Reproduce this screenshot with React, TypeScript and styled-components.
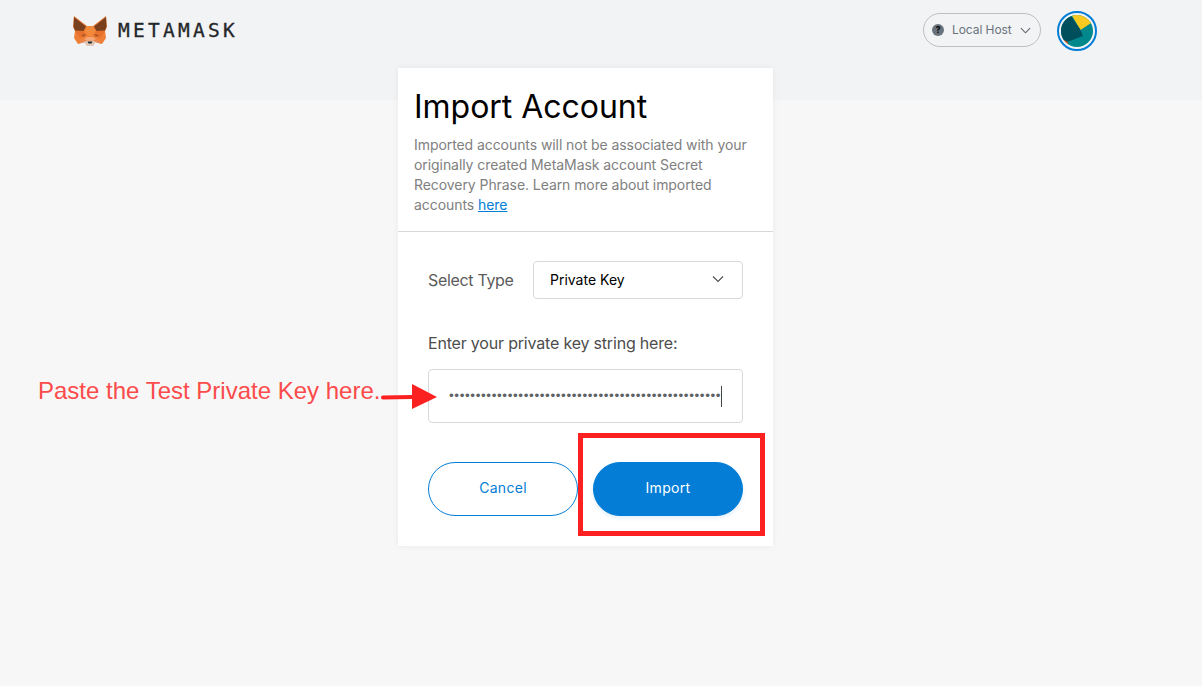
import React from "react";
import styled, { createGlobalStyle } from "styled-components";

const Global = createGlobalStyle`
  html, body { margin: 0; padding: 0; height: 100%; }
  body { background: #f7f7f7; font-family: "Inter", sans-serif; overflow: hidden; }
  #root { height: 100%; }
`;

const Page = styled.div`
  position: relative;
  width: 1202px;
  height: 686px;
  background: #f7f7f7;
  overflow: hidden;
`;

const HeaderBand = styled.header`
  height: 100px;
  background: #f2f3f4;
  box-sizing: border-box;
  padding: 11px 105px 0 73px;
  display: flex;
  justify-content: space-between;
  align-items: flex-start;
`;

const Brand = styled.div`
  display: flex;
  align-items: center;
  gap: 11px;
  height: 40px;
`;

const Wordmark = styled.span`
  font-family: "DejaVu Sans Mono", monospace;
  font-weight: 400;
  font-size: 19.5px;
  letter-spacing: 3.25px;
  color: #24272a;
  line-height: 40px;
  -webkit-text-stroke: 0.3px #24272a;
`;

const HeaderRight = styled.div`
  display: flex;
  align-items: center;
  gap: 16px;
`;

const NetworkPill = styled.div`
  width: 118px;
  height: 34px;
  margin-bottom: 2px;
  box-sizing: border-box;
  border: 1px solid #bbc0c5;
  border-radius: 17px;
  display: flex;
  align-items: center;
  padding: 0 9px 0 8px;
  color: #6a737d;
  font-family: "Inter", sans-serif;
  font-size: 12px;
  letter-spacing: -0.07px;
`;

const HelpDot = styled.span`
  width: 12px;
  height: 12px;
  border-radius: 50%;
  background: #6a737d;
  color: #0c0e10;
  font-size: 9px;
  font-weight: 800;
  line-height: 12px;
  text-align: center;
  margin-right: 8px;
  flex: none;
`;

const PillLabel = styled.span`
  flex: 1;
  white-space: nowrap;
  padding-bottom: 2px;
`;

const Avatar = styled.div`
  width: 40px;
  height: 40px;
  box-sizing: border-box;
  border: 2px solid #037dd6;
  border-radius: 50%;
  padding: 2px;
  background: #f2f3f4;
`;

const Card = styled.main`
  width: 375px;
  height: 478px;
  margin: -32px 0 0 398px;
  background: #fff;
  box-shadow: 0 0 6px rgba(0, 0, 0, 0.06);
  display: flex;
  flex-direction: column;
  position: relative;
`;

const CardHead = styled.div`
  height: 164px;
  box-sizing: border-box;
  padding: 19px 16px 0;
  border-bottom: 1px solid #d6d9dc;
`;

const Title = styled.h1`
  margin: 0;
  font-family: "Inter", sans-serif;
  font-weight: 400;
  font-size: 32px;
  line-height: 40px;
  letter-spacing: -0.03px;
  color: #000;
`;

const Description = styled.p`
  margin: 8px 0 0;
  font-family: "Inter", sans-serif;
  font-size: 14px;
  line-height: 20px;
  letter-spacing: -0.07px;
  color: #808080;
`;

const Link = styled.a`
  color: #037dd6;
  text-decoration: underline;
`;

const CardBody = styled.div`
  flex: 1;
  padding: 29px 30px 30px;
  display: flex;
  flex-direction: column;
`;

const TypeRow = styled.div`
  display: flex;
  align-items: center;
  justify-content: space-between;
`;

const Label = styled.label`
  font-family: "Inter", sans-serif;
  font-size: 16px;
  letter-spacing: -0.32px;
  color: #5b5b5b;
`;

const Select = styled.div`
  width: 210px;
  height: 38px;
  box-sizing: border-box;
  border: 1px solid #d6d9dc;
  border-radius: 4px;
  padding: 0 18px 2px 16px;
  display: flex;
  align-items: center;
  justify-content: space-between;
  font-family: "Inter", sans-serif;
  font-size: 14px;
  letter-spacing: 0;
  color: #000;
`;

const KeyLabel = styled(Label)`
  display: block;
  margin-top: 34px;
  line-height: 20px;
  letter-spacing: -0.19px;
  color: #4d4d4d;
`;

const KeyField = styled.div`
  margin-top: 16px;
  height: 54px;
  box-sizing: border-box;
  border: 1px solid #d6d9dc;
  border-radius: 4px;
  padding: 0 20px;
  display: flex;
  align-items: center;
`;

const Dots = styled.span`
  font-family: "Liberation Sans", sans-serif;
  font-size: 13.5px;
  line-height: 20px;
  color: #5f6368;
  letter-spacing: 0.61px;
  white-space: nowrap;
`;

const Caret = styled.span`
  width: 1px;
  height: 21px;
  background: #444;
  flex: none;
`;

const Actions = styled.div`
  margin-top: 39px;
  display: flex;
  gap: 15px;
`;

const Button = styled.button<{ $primary?: boolean }>`
  width: 150px;
  height: 54px;
  box-sizing: border-box;
  border-radius: 27px;
  border: 1px solid #037dd6;
  background: ${(p) => (p.$primary ? "#037dd6" : "#fff")};
  color: ${(p) => (p.$primary ? "#fff" : "#037dd6")};
  box-shadow: ${(p) => (p.$primary ? "0 2px 4px rgba(3, 125, 214, 0.12)" : "none")};
  font-family: "Inter", sans-serif;
  font-size: 14px;
  letter-spacing: 0.3px;
  padding: 0 0 3px;
`;

const Note = styled.span`
  position: absolute;
  left: 38px;
  top: 377px;
  font-family: "Liberation Sans", Arial, sans-serif;
  font-size: 24px;
  line-height: 28px;
  color: #fc4b4b;
  white-space: nowrap;
`;

const ArrowMark = styled.svg`
  position: absolute;
  left: 380px;
  top: 382px;
`;

const Highlight = styled.div`
  position: absolute;
  left: 578px;
  top: 433px;
  width: 187px;
  height: 103px;
  box-sizing: border-box;
  border: 5px solid #fc2121;
`;

const Fox = () => (
  <svg width="34" height="31" viewBox="0 0 34 31" aria-hidden="true">
    <polygon points="1,0 14,10 20,10 33,0 34,11 32,15 33,22 29,28 22,26 20,30 14,30 12,26 5,28 1,22 2,15 0,11" fill="#ef7f36" />
    <polygon points="1,1 13,10.5 10.5,15 2,14.5 0.5,10.5" fill="#7a3f1c" />
    <polygon points="33,1 21,10.5 23.5,15 32,14.5 33.5,10.5" fill="#7a3f1c" />
    <polygon points="14,10 20,10 22,15 17,21 12,15" fill="#f28a3c" />
    <polygon points="2,15 10.5,15 13,20 7,22" fill="#e6702c" />
    <polygon points="32,15 23.5,15 21,20 27,22" fill="#e6702c" />
    <polygon points="8,19 13,18 11,21" fill="#a8562b" />
    <polygon points="26,19 21,18 23,21" fill="#a8562b" />
    <polygon points="5,28 11,23 14,29 12,26" fill="#e58b5b" />
    <polygon points="29,28 23,23 20,29 22,26" fill="#e58b5b" />
    <polygon points="11,23 14,25 20,25 23,23 20,21 14,21" fill="#f3a676" />
    <polygon points="12,25 22,25 20,30 14,30" fill="#dccabd" />
    <polygon points="14.5,25.5 19.5,25.5 18.5,27.5 15.5,27.5" fill="#24272a" />
  </svg>
);

const Chevron = ({ size, color }: { size: number; color: string }) => (
  <svg width={size} height={size} viewBox="0 0 12 12" fill="none" stroke={color} strokeWidth="1.1" aria-hidden="true">
    <polyline points="1,3.5 6,8.5 11,3.5" />
  </svg>
);

const Identicon = () => (
  <svg width="32" height="32" viewBox="0 0 32 32" aria-hidden="true">
    <defs>
      <clipPath id="round"><circle cx="16" cy="16" r="16" /></clipPath>
    </defs>
    <g clipPath="url(#round)">
      <rect width="32" height="32" fill="#01888c" />
      <polygon points="10,-1 19.5,15 33,6 26,-2" fill="#f8c91f" />
      <polygon points="10,1 19,14 22,21 6,27 -2,22 -2,-1 10,-1" fill="#004f5c" />
      <polygon points="3,25 6.5,27 8,32 2,30" fill="#f5541a" />
    </g>
  </svg>
);

export default function App() {
  return (
    <Page>
      <Global />
      <HeaderBand>
        <Brand>
          <Fox />
          <Wordmark>METAMASK</Wordmark>
        </Brand>
        <HeaderRight>
          <NetworkPill>
            <HelpDot>?</HelpDot>
            <PillLabel>Local Host</PillLabel>
            <Chevron size={11} color="#5a6068" />
          </NetworkPill>
          <Avatar>
            <Identicon />
          </Avatar>
        </HeaderRight>
      </HeaderBand>
      <Card>
        <CardHead>
          <Title>Import Account</Title>
          <Description>
            Imported accounts will not be associated with your originally created MetaMask account Secret Recovery Phrase. Learn more about imported accounts <Link>here</Link>
          </Description>
        </CardHead>
        <CardBody>
          <TypeRow>
            <Label>Select Type</Label>
            <Select>
              Private Key
              <Chevron size={12} color="#4d4d4d" />
            </Select>
          </TypeRow>
          <KeyLabel>Enter your private key string here:</KeyLabel>
          <KeyField>
            <Dots>{"•".repeat(51)}</Dots>
            <Caret />
          </KeyField>
          <Actions>
            <Button>Cancel</Button>
            <Button $primary>Import</Button>
          </Actions>
        </CardBody>
      </Card>
      <Note>Paste the Test Private Key here.</Note>
      <ArrowMark width="62" height="30" viewBox="0 0 62 30" aria-hidden="true">
        <path d="M3 15.5 L32 15" stroke="#fc2121" strokeWidth="4" strokeLinecap="round" />
        <polygon points="32,2 57,15 32,27" fill="#fc2121" />
      </ArrowMark>
      <Highlight />
    </Page>
  );
}
